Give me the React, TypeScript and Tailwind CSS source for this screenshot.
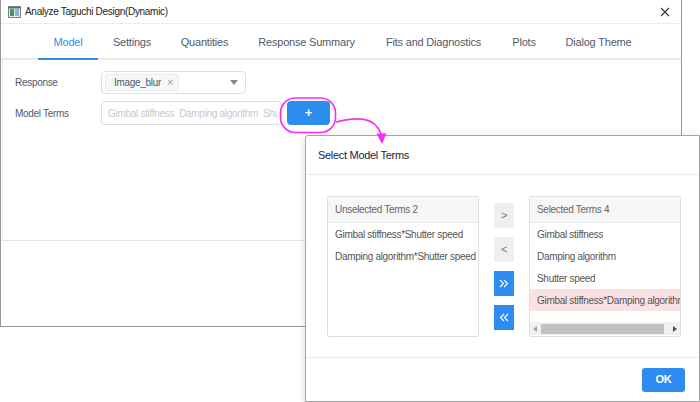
import { useState } from 'react'

const tabs = [
    { title: 'Model', w: 'w-[60px]' },
    { title: 'Settings', w: 'w-[68px]' },
    { title: 'Quantities', w: 'w-[77px]' },
    { title: 'Response Summary', w: 'w-[127px]' },
    { title: 'Fits and Diagnostics', w: 'w-[127px]' },
    { title: 'Plots', w: 'w-[54px]' },
    { title: 'Dialog Theme', w: 'w-[95px]' },
]

const unselected = ['Gimbal stiffness*Shutter speed', 'Damping algorithm*Shutter speed']
const selected = ['Gimbal stiffness', 'Damping algorithm', 'Shutter speed', 'Gimbal stiffness*Damping algorithm']

const Chevrons = ({ dir }: { dir: 'right' | 'left' }) => (
    <svg width="10" height="9" viewBox="0 0 10 9" fill="none" stroke="white" strokeWidth="1.1">
        {dir === 'right' ? (
            <>
                <path d="M1 1l3.5 3.5L1 8" />
                <path d="M5 1l3.5 3.5L5 8" />
            </>
        ) : (
            <>
                <path d="M5 1L1.5 4.5 5 8" />
                <path d="M9 1L5.5 4.5 9 8" />
            </>
        )}
    </svg>
)

const MainWindow = () => {
    const [active, setActive] = useState('Model')

    return (
        <div className="w-[682px] h-[327px] border-x border-b border-[#979797] bg-white flex flex-col">
            <div className="h-[24px] flex items-center pl-[7px] pr-[11px] border-b border-[#ececec] shrink-0">
                <svg width="13" height="12" viewBox="0 0 13 12">
                    <rect x="0.5" y="0.5" width="12" height="11" fill="#e9ecef" stroke="#7a7f86" />
                    <rect x="2" y="3" width="4" height="7" fill="#3f9a5a" />
                    <rect x="7" y="3" width="4" height="7" fill="#8fb0d6" />
                    <rect x="1" y="1" width="11" height="1.5" fill="#5b6470" />
                </svg>
                <span className="ml-[4px] text-[10px] tracking-[-0.3px] text-[#222]">Analyze Taguchi Design(Dynamic)</span>
                <svg className="ml-auto" width="10" height="10" viewBox="0 0 10 10" stroke="#333" strokeWidth="1.1">
                    <path d="M1 1l8 8M9 1L1 9" />
                </svg>
            </div>

            <div className="h-[36px] flex pl-[37px] border-b-2 border-[#e8eaec] shrink-0">
                {tabs.map((tab) => (
                    <div
                        key={tab.title}
                        className={`${tab.w} flex items-center justify-center whitespace-nowrap text-[11px] tracking-[-0.2px] pt-[2px] cursor-pointer ${active === tab.title ? 'text-[#2d8cf0] border-b-2 border-[#2d8cf0] mb-[-2px]' : 'text-[#515a6e]'}`}
                        onClick={() => setActive(tab.title)}
                    >
                        {tab.title}
                    </div>
                ))}
            </div>

            <div className="h-[181px] ml-[1px] border-l border-b border-[#e4e5ea] pt-[11px] flex flex-col gap-[7px] text-[10px] tracking-[-0.3px] text-[#515a6e]">
                <div className="flex items-center h-[23px]">
                    <span className="w-[98px] pl-[12px]">Response</span>
                    <div className="w-[145px] h-[23px] border border-[#dcdee2] rounded-[4px] flex items-center pl-[3px] pr-[7px]">
                        <div className="h-[17px] flex items-center gap-[6px] pl-[8px] pr-[5px] bg-[#f7f7f7] border border-[#e8eaec] rounded-[3px]">
                            <span>Image_blur</span>
                            <span className="text-[#999] text-[11px]">×</span>
                        </div>
                        <svg className="ml-auto" width="8" height="5" viewBox="0 0 8 5">
                            <path d="M0 0h8L4 5z" fill="#808695" />
                        </svg>
                    </div>
                </div>
                <div className="flex items-center h-[24px]">
                    <span className="w-[98px] pl-[12px]">Model Terms</span>
                    <div className="w-[181px] h-[24px] border border-[#dcdee2] rounded-[4px] flex items-center gap-[5px] pl-[6px] pr-[3px] overflow-hidden whitespace-nowrap text-[#c5c8ce]">
                        <span className="shrink-0">Gimbal stiffness</span>
                        <span className="shrink-0">Damping algorithm</span>
                        <span className="min-w-0 overflow-hidden">Shutter speed</span>
                    </div>
                    <button className="ml-[5px] w-[43px] h-[24px] rounded-[4px] bg-[#2d8cf0] text-white text-[13px] font-bold flex items-center justify-center">
                        +
                    </button>
                </div>
            </div>
        </div>
    )
}

const TermsPanel = ({ title, items, highlight, scroll }: { title: string; items: string[]; highlight?: number; scroll?: boolean }) => (
    <div className="w-[152px] h-[141px] border border-[#dcdee2] rounded-[2px] flex flex-col overflow-hidden">
        <div className="h-[26px] shrink-0 flex items-center pl-[7px] bg-[#f7f7f7] border-b border-[#e8eaec] text-[#666]">{title}</div>
        <div className="flex-1 overflow-hidden">
            {items.map((item, i) => (
                <div key={item} className={`h-[22px] flex items-center pl-[7px] whitespace-nowrap overflow-hidden text-[#555] ${i === highlight ? 'bg-[#fbe1e3]' : ''}`}>
                    <span className="min-w-0 overflow-hidden">{item}</span>
                </div>
            ))}
        </div>
        {scroll ? (
            <div className="h-[13px] shrink-0 mb-[1px] flex items-center bg-[#f1f1f1]">
                <svg className="mx-[3px]" width="5" height="6" viewBox="0 0 5 6">
                    <path d="M4 0v6L0 3z" fill="#a3a3a3" />
                </svg>
                <div className="w-[123px] h-[10px] bg-[#c1c1c1]" />
                <svg className="ml-auto mr-[3px]" width="5" height="6" viewBox="0 0 5 6">
                    <path d="M1 0v6l4-3z" fill="#505050" />
                </svg>
            </div>
        ) : null}
    </div>
)

const SelectDialog = () => (
    <div className="absolute left-[305px] top-[135px] w-[395px] h-[267px] bg-white border border-[#a5a5a5] rounded-tl-[3px] shadow-[0_2px_8px_rgba(0,0,0,0.15)] flex flex-col text-[10px] tracking-[-0.3px]">
        <div className="h-[39px] shrink-0 flex items-center pl-[12px] border-b border-[#e8eaec] text-[11px] text-[#17233d]">Select Model Terms</div>
        <div className="h-[183px] shrink-0 flex pl-[21px] pt-[21px] border-b border-[#e8eaec]">
            <TermsPanel title="Unselected Terms 2" items={unselected} />
            <div className="ml-[15px] pt-[7px] flex flex-col gap-[9px]">
                <button className="w-[20px] h-[25px] bg-[#efefef] text-[#777] text-[11px] flex items-center justify-center">&gt;</button>
                <button className="w-[20px] h-[25px] bg-[#efefef] text-[#777] text-[11px] flex items-center justify-center">&lt;</button>
                <button className="w-[20px] h-[25px] bg-[#2d8cf0] flex items-center justify-center">
                    <Chevrons dir="right" />
                </button>
                <button className="w-[20px] h-[25px] bg-[#2d8cf0] flex items-center justify-center">
                    <Chevrons dir="left" />
                </button>
            </div>
            <div className="ml-[15px]">
                <TermsPanel title="Selected Terms 4" items={selected} highlight={3} scroll />
            </div>
        </div>
        <div className="flex-1 flex items-center justify-end pr-[14px]">
            <button className="w-[43px] h-[24px] rounded-[3px] bg-[#2d8cf0] text-white text-[11px] font-semibold">OK</button>
        </div>
    </div>
)

export default function App() {
    return (
        <div className="relative w-[700px] h-[402px] bg-white overflow-hidden font-['Liberation_Sans',Arial,sans-serif]">
            <MainWindow />
            <SelectDialog />
            <svg className="absolute left-0 top-0 pointer-events-none" width="700" height="402" viewBox="0 0 700 402" fill="none">
                <rect x="280.5" y="98" width="55" height="34.5" rx="15" stroke="#f52ef5" strokeWidth="1.6" />
                <path d="M336 122C356 117 375 116 381 134" stroke="#f52ef5" strokeWidth="1.6" />
                <path d="M376.5 133.5h10L382 144z" fill="#f52ef5" />
            </svg>
        </div>
    )
}
